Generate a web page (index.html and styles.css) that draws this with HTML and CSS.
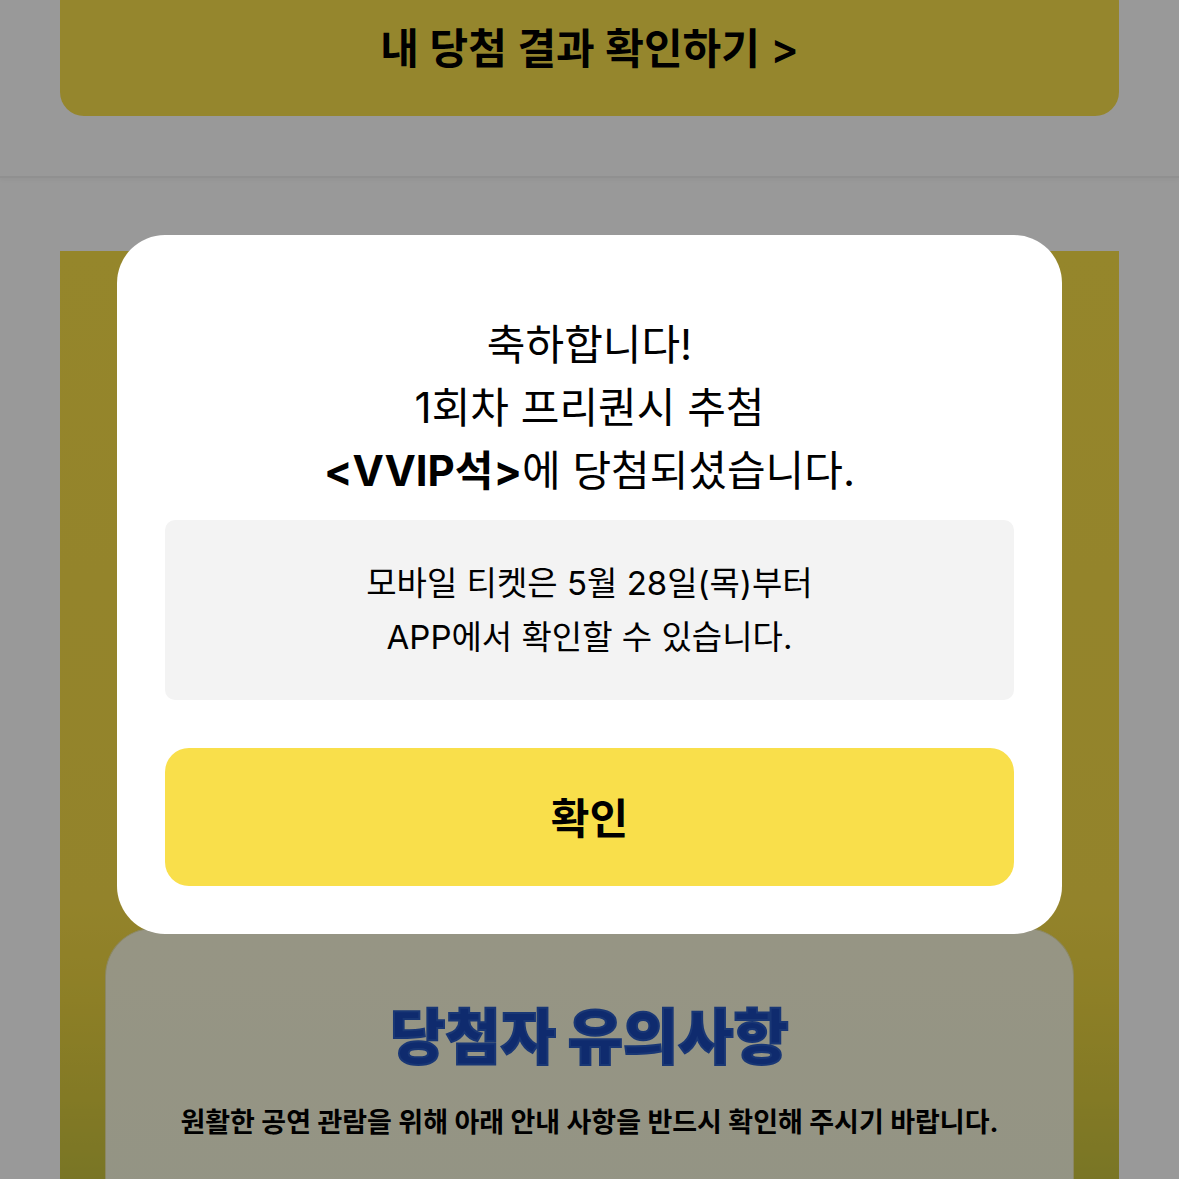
FILE: index.html
```html
<!DOCTYPE html>
<html lang="ko">
<head>
    <meta charset="UTF-8">
    <meta name="viewport" content="width=device-width, initial-scale=1.0">
    <title>당첨 결과 확인</title>
    <link rel="stylesheet" href="styles.css">
</head>
<body>
    <main class="page">
        <section class="result-section">
            <button type="button" class="btn result-btn">내 당첨 결과 확인하기 &gt;</button>
        </section>

        <section class="event-section">
            <div class="event-banner">
                <div class="event-visual"></div>
                <div class="guide-card">
                    <h2 class="guide-title">당첨자 유의사항</h2>
                    <p class="guide-text">원활한 공연 관람을 위해 아래 안내 사항을 반드시 확인해 주시기 바랍니다.</p>
                </div>
            </div>
        </section>
    </main>

    <!-- Result popup -->
    <div class="overlay">
        <div class="modal" role="dialog" aria-modal="true" aria-labelledby="modalMessage">
            <p class="modal-message" id="modalMessage">
                축하합니다!<br>
                1회차 프리퀀시 추첨<br>
                <strong>&lt;VVIP석&gt;</strong>에 당첨되셨습니다.
            </p>
            <p class="modal-notice">
                모바일 티켓은 5월 28일(목)부터<br>
                APP에서 확인할 수 있습니다.
            </p>
            <button type="button" class="btn">확인</button>
        </div>
    </div>
</body>
</html>
```
FILE: styles.css
```css
* {
    box-sizing: border-box;
    margin: 0;
    padding: 0;
}

body {
    height: 100vh;
    overflow: hidden;
    background: #fff;
    color: #000;
    font-family: Inter, "Noto Sans CJK KR", sans-serif;
}

.page {
    display: flex;
    flex-direction: column;
    min-height: 100vh;
}

.btn {
    display: block;
    width: 100%;
    height: 138px;
    padding-bottom: 4px;
    border: 0;
    border-radius: 24px;
    background: #f9df4b;
    color: #000;
    font-family: inherit;
    font-size: 42px;
    font-weight: 600;
    cursor: pointer;
}

.result-section {
    padding: 0 60px 60px;
    border-bottom: 2px solid #f0f0f0;
    box-shadow: 0 2px 4px rgba(0, 0, 0, 0.04);
}

/* page is scrolled, the top of the button is cut off */
.result-btn {
    margin-top: -22px;
}

.event-section {
    display: flex;
    flex: 1;
    padding: 73px 60px 0;
}

.event-banner {
    display: flex;
    flex: 1;
    flex-direction: column;
    padding: 0 45px;
    background: linear-gradient(#f8df49 0, #f6db48 650px, #ebd440 750px, #dacb3f 850px, #cac43e 928px);
}

.event-visual {
    height: 677px;
}

.guide-card {
    flex: 1;
    padding: 64px 24px;
    border: 1px solid #e8e2a4;
    border-bottom: 0;
    border-radius: 48px 48px 0 0;
    background: linear-gradient(#fbf8dc, #f6f7dd);
    text-align: center;
}

.guide-title {
    color: #1a48b8;
    font-size: 60px;
    font-weight: 900;
    line-height: 88px;
    -webkit-text-stroke: 2px #2b5cc4;
}

.guide-text {
    margin-top: 20px;
    font-size: 27px;
    font-weight: 700;
    line-height: 44px;
}

.overlay {
    position: fixed;
    inset: 0;
    display: flex;
    align-items: center;
    padding: 0 117px 10px;
    background: rgba(0, 0, 0, 0.4);
}

.modal {
    width: 100%;
    padding: 78px 48px 48px;
    border-radius: 48px;
    background: #fff;
    text-align: center;
}

.modal-message {
    font-size: 42px;
    line-height: 63px;
}

.modal-notice {
    margin: 18px 0 48px;
    padding: 36px 24px;
    border-radius: 10px;
    background: #f3f3f3;
    font-size: 33px;
    line-height: 54px;
}
```
